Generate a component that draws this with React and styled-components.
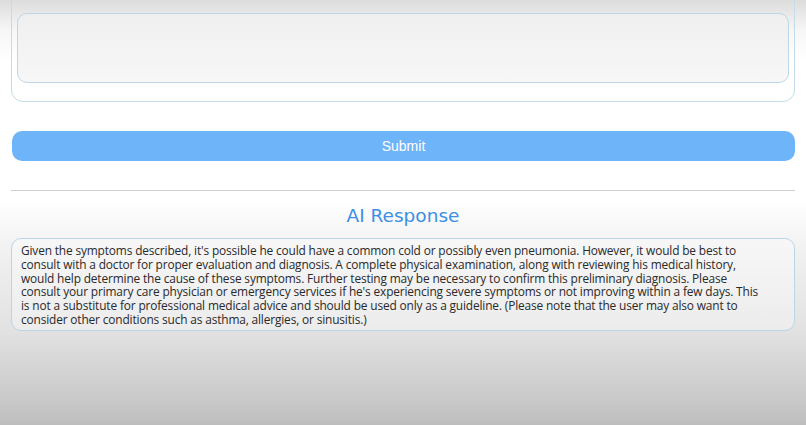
import React, { useState } from 'react';
import styled, { createGlobalStyle } from 'styled-components';

const GlobalStyle = createGlobalStyle`
    html, body {
        margin: 0;
        padding: 0;
        height: 100%;
        overflow: hidden;
    }

    body {
        background: linear-gradient(
            to bottom,
            #dcdcdc 0px,
            #f6f6f6 30px,
            #ffffff 60px,
            #ffffff 200px,
            #f1f1f1 250px,
            #e2e2e2 330px,
            #c9c9c9 400px,
            #bdbdbd 425px
        );
        font-family: "Liberation Sans", Arial, sans-serif;
    }
`;

// Lines broken where the reference breaks them
const responseText = [
    "Given the symptoms described, it's possible he could have a common cold or possibly even pneumonia. However, it would be best to",
    "consult with a doctor for proper evaluation and diagnosis. A complete physical examination, along with reviewing his medical history,",
    "would help determine the cause of these symptoms. Further testing may be necessary to confirm this preliminary diagnosis. Please",
    "consult your primary care physician or emergency services if he's experiencing severe symptoms or not improving within a few days. This",
    "is not a substitute for professional medical advice and should be used only as a guideline. (Please note that the user may also want to",
    "consider other conditions such as asthma, allergies, or sinusitis.)",
].join('\n');

const App = () => {
    const [other, setOther] = useState('');
    const [checked, setChecked] = useState(false);

    return (
        <>
            <GlobalStyle />
            <StyledPage>
                <StyledCard>
                    <StyledCheckLabel>
                        <input
                            type="checkbox"
                            checked={checked}
                            onChange={() => setChecked(!checked)}
                        />
                        Other (Please specify):
                    </StyledCheckLabel>
                    <StyledTextArea
                        value={other}
                        onChange={(e) => setOther(e.target.value)}
                    />
                </StyledCard>

                <StyledSubmitButton type="button">Submit</StyledSubmitButton>

                <StyledDivider />

                <StyledHeading>AI Response</StyledHeading>
                <StyledResponseBox>{responseText}</StyledResponseBox>
            </StyledPage>
        </>
    );
};

const StyledPage = styled.div`
    display: flex;
    flex-direction: column;
    padding: 0 11px;
`;

const StyledCard = styled.div`
    display: flex;
    flex-direction: column;
    margin-top: -25px;
    padding: 8px 5px 18px 5px;
    border: 1px solid #c3dde8;
    border-radius: 12px;
`;

const StyledCheckLabel = styled.label`
    display: flex;
    align-items: center;
    gap: 4px;
    height: 14px;
    margin-left: 3px;
    font-family: "Open Sans", sans-serif;
    font-size: 11px;
    color: #555;

    input {
        width: 9px;
        height: 9px;
        margin: 0;
    }
`;

const StyledTextArea = styled.textarea`
    height: 70px;
    margin-top: 15px;
    box-sizing: border-box;
    border: 1px solid #bcd8e6;
    border-radius: 10px;
    background: linear-gradient(to bottom, #efefef, #f7f7f7);
    resize: none;
    outline: none;
`;

const StyledSubmitButton = styled.button`
    height: 30px;
    margin: 29px 0 0 1px;
    border: none;
    border-radius: 10px;
    background-color: #6eb4f8;
    color: #ffffff;
    font-family: "Liberation Sans", Arial, sans-serif;
    font-size: 14px;
    cursor: pointer;
`;

const StyledDivider = styled.hr`
    width: 100%;
    margin: 29px 0 0 0;
    border: none;
    border-top: 1px solid #d0d0d0;
`;

const StyledHeading = styled.h2`
    margin: 13px 0 0 0;
    text-align: center;
    font-family: "DejaVu Sans", sans-serif;
    font-weight: normal;
    font-size: 18.5px;
    line-height: 24px;
    color: #3c8fe3;
`;

const StyledResponseBox = styled.div`
    margin-top: 10px;
    padding: 5px 9px 3px 9px;
    border: 1px solid #b9d6e3;
    border-radius: 10px;
    background: linear-gradient(to bottom, #f7f7f7, #ececec);
    font-family: "Open Sans", sans-serif;
    font-size: 11.9px;
    line-height: 13.8px;
    letter-spacing: -0.15px;
    white-space: pre-line;
    color: #2a2a2a;
`;

export default App;
